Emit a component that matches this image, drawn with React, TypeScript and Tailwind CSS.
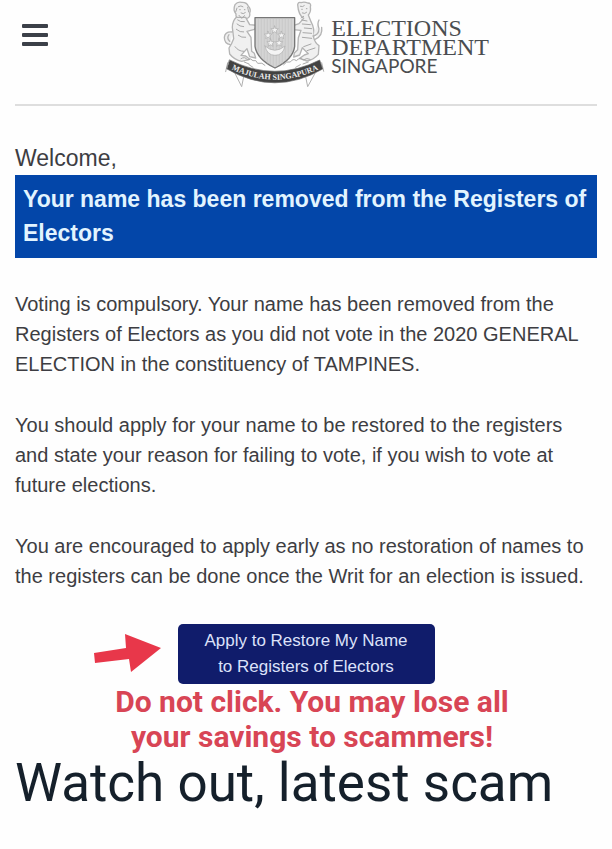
function MenuIcon() {
  return (
    <svg width="26" height="24" viewBox="0 0 26 24" fill="#3b4048" aria-hidden="true">
      <rect width="26" height="4" rx="1" />
      <rect y="9" width="26" height="4" rx="1" />
      <rect y="18" width="26" height="4" rx="1" />
    </svg>
  );
}

function Crest() {
  return (
    <svg width="104" height="90" viewBox="22 0 312 270" fill="none" strokeLinecap="round" strokeLinejoin="round" role="img" aria-label="Crest">
      {/* lion */}
      <g stroke="#b4b4b4" strokeWidth="4" fill="#f0f0f0">
        <path d="M58 14q8-10 20-7q16-1 20 12q9 9 4 20q3 14-10 17q-8 9-19 1q-14-2-12-15q-10-12-3-28Z" />
        <path d="M62 52q-12 12-12 30l4 34q-6 16-14 28l2 18q14 18 36 22l24-6l-12-10l-14-2l18-20l8 24l18 4l-4-14l-8-6l-2-42l-12-18l22-6l8-12l-22-2l-12-22Z" />
        <path d="M50 96q-22-2-24 16q0 20 18 22M40 104q-8 10 2 20" />
      </g>
      <g stroke="#a8a8a8" strokeWidth="3">
        <path d="M68 20q8-5 14 0M72 29h2M86 29h2M76 39q7 5 13-1M66 60q8 7 20 5M64 72q8 8 20 8M62 88q12 10 22 8M68 106q10 8 22 6M58 140q10 14 26 14M64 24l-4 12M96 22l3 14M70 46l8 9l9-8" />
      </g>
      {/* tiger */}
      <g stroke="#b4b4b4" strokeWidth="4" fill="#f0f0f0">
        <path d="M246 14q2-9 10-6q10-4 20 1q12 0 8 12q3 14-6 24l8 20q12 22 8 48q4 16 16 24l-2 26q-14 16-34 20l-22-8l14-10l12-4l-18-18l-8 22l-18 6l2-12l10-10l2-36l8-22l-24-2l-6-10l24-8l14-16q-16-10-18-41Z" />
        <path d="M292 108q18-4 18-22q-6-16 0-26M298 118q24-10 20-36" />
      </g>
      <g stroke="#a8a8a8" strokeWidth="3">
        <path d="M254 19q8 3 12-2M258 28h2M272 26h2M260 39q8 4 13-2M258 60l16 3M260 72l24 2M266 84l22 2M262 98l26 2M260 112l28 3M264 140l22-8M274 152l24-8M256 54l8-5" />
      </g>
      {/* foliage below the shield */}
      <path d="M76 176q12-8 20 4q8-8 16 2q10-4 14 8q14-4 22 6M204 194q8-12 20-8q8-12 18-4q12-12 20-2q12-8 22-2M100 194l12 8M240 202l14-8M86 186l14 6M262 192l16-6" stroke="#aaa" strokeWidth="3" />
      {/* shield */}
      <path d="M118 53H237V139Q232 178 178 204Q124 178 118 139Z" fill="#d4d4d4" stroke="#777" strokeWidth="4" />
      <path d="M128 58v96M137 58v112M146 58v122M155 58v131M164 58v136M173 58v140M182 58v140M191 58v136M200 58v131M209 58v122M218 58v112M227 58v96" stroke="#c2c2c2" strokeWidth="2" />
      <path d="M148 138q29 26 60 0q-6 28-30 28t-30-28Z" fill="#f4f4f4" stroke="#aaa" strokeWidth="2" />
      <g fill="#f4f4f4" stroke="#aaa" strokeWidth="2">
        <path d="m177 78 3 8h8l-6 6 2 8-7-5-7 5 2-8-6-6h8Z" />
        <path d="m157 94 3 8h8l-6 6 2 8-7-5-7 5 2-8-6-6h8Z" />
        <path d="m197 94 3 8h8l-6 6 2 8-7-5-7 5 2-8-6-6h8Z" />
        <path d="m165 117 3 8h8l-6 6 2 8-7-5-7 5 2-8-6-6h8Z" />
        <path d="m190 117 3 8h8l-6 6 2 8-7-5-7 5 2-8-6-6h8Z" />
      </g>
      {/* ribbon */}
      <path d="m58 220 20 40 6-30M298 220l-22 40-6-30M36 188l-6 27M318 188l6 26" stroke="#b0b0b0" strokeWidth="3" />
      <path d="M42 180Q178 248 312 180L321 207Q178 290 34 207Z" fill="#424242" stroke="#666" strokeWidth="2" />
      <path id="motto" d="M38 203Q178 275 318 203" />
      <text fill="#ececec" fontFamily="Liberation Serif, serif" fontSize="24" fontWeight="700" textAnchor="middle">
        <textPath href="#motto" startOffset="50%">MAJULAH SINGAPURA</textPath>
      </text>
    </svg>
  );
}

function Arrow() {
  return (
    <svg width="68" height="40" viewBox="0 0 68 40" fill="#e8374a" aria-hidden="true">
      <path d="M0 19 32 14 31 0 67 14 37 38 35 25 1 29Z" />
    </svg>
  );
}

const paragraphs = [
  "Voting is compulsory. Your name has been removed from the Registers of Electors as you did not vote in the 2020 GENERAL ELECTION in the constituency of TAMPINES.",
  "You should apply for your name to be restored to the registers and state your reason for failing to vote, if you wish to vote at future elections.",
  "You are encouraged to apply early as no restoration of names to the registers can be done once the Writ for an election is issued.",
];

export default function App() {
  return (
    <div className="min-h-screen bg-[#fefefe] px-[15px] pb-8 font-['Liberation_Sans',Arial,sans-serif] text-[#3d3d42]">
      <header className="grid grid-cols-[2fr_auto_1fr] items-start border-b-2 border-[#dedede] pb-[14px]">
        <button type="button" aria-label="Menu" className="ml-[7px] mt-6 w-fit">
          <MenuIcon />
        </button>
        <div className="flex gap-1 pr-1">
          <Crest />
          <div className="pt-[19px] text-[#4a4d50]">
            <p className="font-['Liberation_Serif',serif] text-[24px] leading-[19px]">
              ELECTIONS
              <br />
              DEPARTMENT
            </p>
            <p className="font-['Lato',sans-serif] text-[19px] leading-[18px]">SINGAPORE</p>
          </div>
        </div>
      </header>

      <main>
        <p className="pt-[35px] text-[23px] leading-[34px]">Welcome,</p>
        <h1 className="bg-[#0346a9] px-2 pb-2 pt-[7px] text-[23px] font-bold leading-[34px] text-[#e2f4ff]">
          Your name has been removed from the Registers of Electors
        </h1>

        <div className="mt-[31px] space-y-[31px] text-[20px] leading-[30px]">
          {paragraphs.map((text) => (
            <p key={text}>{text}</p>
          ))}
        </div>

        <div className="mt-[33px] grid grid-cols-[1fr_auto_1fr] items-center gap-4">
          <div className="flex justify-end">
            <Arrow />
          </div>
          <button
            type="button"
            className="h-[60px] w-[257px] rounded-[5px] bg-[#101c6b] text-[17px] leading-[26px] text-[#dde2fa]"
          >
            Apply to Restore My Name
            <br />
            to Registers of Electors
          </button>
        </div>

        <p className="pl-3 text-center font-['Roboto',sans-serif] text-[30px] font-bold leading-[35px] text-[#d84555]">
          Do not click. You may lose all
          <br />
          your savings to scammers!
        </p>
        <h2 className="font-['Roboto',sans-serif] text-[53px] leading-[58px] text-[#15202b]">
          Watch out, latest scam
        </h2>
      </main>
    </div>
  );
}
